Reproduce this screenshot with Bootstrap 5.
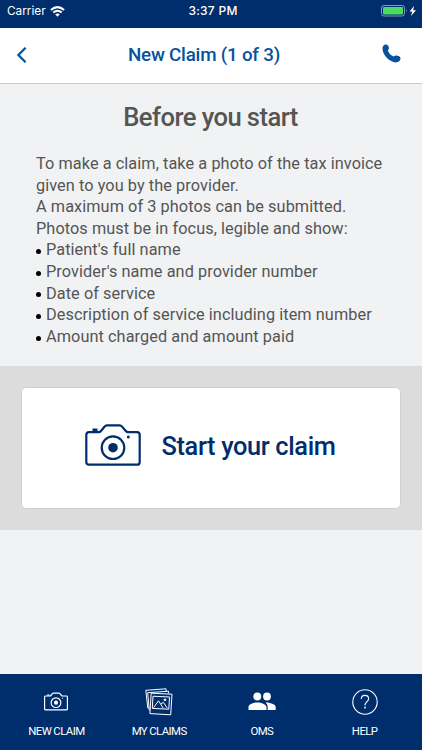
<!DOCTYPE html>
<html lang="en">
<head>
<meta charset="utf-8">
<meta name="viewport" content="width=device-width, initial-scale=1">
<title>New Claim</title>
<link href="https://cdn.jsdelivr.net/npm/bootstrap@5.3.0/dist/css/bootstrap.min.css" rel="stylesheet">
<style>
:root { --navy: #002e6c; --blue: #06529c; }
body { font-family: Roboto, sans-serif; background: #f1f2f4; color: #555; height: 750px; overflow: hidden; }
svg { display: block; flex: none; }
.status-strip { height: 28px; background: var(--navy); color: #fff; font: 11.8px/22px Inter, sans-serif; padding: 0 5px 0 7px; }
.status-side { flex: 1 1 0; height: 22px; }
.clock { font-weight: 500; font-size: 12px; letter-spacing: .25px; padding-left: 2px; }
.title-bar { height: 56px; background: #fff; border-bottom: 1px solid #c5c8d8; color: var(--blue); padding: 0 21px 2px 16px; }
.page-title { font-size: 18.8px; font-weight: 500; margin: 0 2px 0 0; line-height: 24px; letter-spacing: -.22px; }
.phone { margin-bottom: 2px; }
.intro { height: 282px; padding: 17px 24px 0 36px; }
.intro-title { font-size: 25.6px; font-weight: 500; line-height: 32px; margin: 0 13px 20px 0; letter-spacing: -.56px; }
.copy { font-size: 16.3px; line-height: 21.6px; letter-spacing: .07px; white-space: nowrap; }
.copy li { display: flex; align-items: center; }
.copy li::before { content: ""; width: 5px; height: 5px; border-radius: 50%; background: #000; margin: 3px 5px 0 0; }
.action-band { height: 164px; background: #dcdcdc; padding: 21px; }
.start-btn { height: 122px; border: 1px solid #cfcfcf; border-radius: 5px; background: #fff; color: var(--navy); font-size: 25.4px; font-weight: 500; gap: 20px; padding: 0 1px 4px 0; }
.start-btn span { letter-spacing: -.37px; }
.start-btn svg { margin-top: -2px; }
.start-btn:hover { background: #fff; color: var(--navy); }
.tab-strip { height: 76px; background: var(--navy); padding: 0 6px 0 5px; }
.tab-item { flex: 1 1 0; color: #fff; font-size: 11.4px; line-height: 16px; letter-spacing: -.6px; text-decoration: none; padding-top: 11px; }
.tab-icon { height: 33px; margin-bottom: 5px; }
</style>
</head>
<body class="d-flex flex-column">
<svg width="0" height="0" class="position-absolute" aria-hidden="true">
  <symbol id="camera" viewBox="0 0 56 42">
    <g fill="none" stroke="currentColor">
      <path d="M4 8.2h9.5q1.5 0 2.5-1.2l3.4-4.2Q20.500 1.300 22 1.300h12.500q1.500 0 2.600 1.300l3.700 4.400q1 1.200 2.500 1.200H52q2.700 0 2.700 2.700v27q0 2.800-2.700 2.800H4q-2.700 0-2.700-2.800v-27Q1.300 8.200 4 8.200z"/>
      <circle cx="28" cy="23.700" r="11.300"/>
    </g>
    <g fill="currentColor"><circle cx="28" cy="23.700" r="4.800"/><path d="M7.500 4.500h5v3h-5z"/><circle cx="43.300" cy="13" r="1.500"/></g>
  </symbol>
</svg>

<header>
  <div class="status-strip d-flex">
    <div class="status-side d-flex align-items-center gap-1">
      <span>Carrier</span>
      <svg width="15" height="11" viewBox="0 0 15 11" fill="none" stroke="#fff" stroke-width="2"><path d="M.9 4.100q6.600-6 13.200 0M3.300 6.600q4.200-3.700 8.400 0"/><path d="M5.200 8.300q2.300-1.800 4.600 0L7.500 10.700z" fill="#fff" stroke="none"/></svg>
    </div>
    <span class="clock">3:37 PM</span>
    <div class="status-side d-flex align-items-center justify-content-end">
      <svg width="36" height="12" viewBox="0 0 36 12"><rect x=".5" y=".5" width="23" height="10.500" rx="2.500" fill="none" stroke="#8298b8"/><rect x="2" y="2" width="20" height="7.500" rx="1" fill="#4cd964"/><path d="M25 4q1.500 1.700 0 3.500z" fill="#8298b8"/><path d="M33 1l-4.500 5.500h2.700L30 11l5-5.800h-2.800z" fill="#fff"/></svg>
    </div>
  </div>
  <nav class="title-bar d-flex align-items-center justify-content-between">
    <svg width="12" height="18" viewBox="0 0 12 18" fill="none" stroke="currentColor" stroke-width="2.300"><path d="M9.600 1.700 2.400 9l7.200 7.300"/></svg>
    <h1 class="page-title">New Claim (1 of 3)</h1>
    <svg class="phone" width="19" height="19" viewBox="0 0 19 19" fill="currentColor"><path d="M3.800.5C5.600.5 6.900 2 6.900 3.900c0 1.100-.5 1.900-1.100 2.500.8 2.500 3.200 5.100 5.900 6.200.7-.7 1.500-1 2.600-1 2.100 0 4.200 1.300 4.200 3 0 2.100-2.300 3.800-4.700 3.800C7.900 18.400.5 11.300.5 4.600.5 2.200 1.700.5 3.800.5z"/></svg>
  </nav>
</header>

<main class="flex-grow-1">
  <section class="intro">
    <h2 class="intro-title text-center">Before you start</h2>
    <div class="copy">
      <div>To make a claim, take a photo of the tax invoice</div>
      <div>given to you by the provider.</div>
      <div>A maximum of 3 photos can be submitted.</div>
      <div>Photos must be in focus, legible and show:</div>
      <ul class="list-unstyled mb-0">
        <li>Patient's full name</li>
        <li>Provider's name and provider number</li>
        <li>Date of service</li>
        <li>Description of service including item number</li>
        <li>Amount charged and amount paid</li>
      </ul>
    </div>
  </section>
  <section class="action-band">
    <button type="button" class="start-btn btn w-100 d-flex align-items-center justify-content-center">
      <svg width="56" height="42" stroke-width="2.200"><use href="#camera"/></svg>
      <span>Start your claim</span>
    </button>
  </section>
</main>

<nav class="tab-strip d-flex">
  <a href="#" class="tab-item d-flex flex-column align-items-center">
    <span class="tab-icon d-flex align-items-center"><svg width="24" height="19" stroke-width="2.800"><use href="#camera"/></svg></span>
    <span>NEW CLAIM</span>
  </a>
  <a href="#" class="tab-item d-flex flex-column align-items-center">
    <span class="tab-icon d-flex align-items-center"><svg width="28" height="28" viewBox="0 0 28 28" fill="none" stroke="#fff"><path d="M2.800 20 .8 2.300 21 .8l.3 3M4.300 22.500 2.700 4.700 23.500 3.200l.2 2.300M2.800 20h1.200"/><path d="m6.200 5.200 20.800 1-1.300 20.600-20.800-1.200z"/><path d="m8 8.200 16.500.8-.7 12.200-16.500-.8z"/><path d="m8.500 19.700 5-6.900 4.600 7.200m-2.300-3.800 2.500-2 4 6"/><circle cx="20" cy="11.800" r=".9" fill="#fff"/></svg></span>
    <span>MY CLAIMS</span>
  </a>
  <a href="#" class="tab-item d-flex flex-column align-items-center">
    <span class="tab-icon d-flex align-items-center"><svg width="28" height="19" viewBox="0 0 28 19" fill="#fff"><circle cx="9.300" cy="4.500" r="3.900"/><circle cx="19" cy="4.500" r="3.900"/><path d="M.5 18v-2.800c0-3.200 5.600-4.800 9-4.800s9 1.600 9 4.800V18zM19.700 18v-2.800c0-2.100-.9-3.500-2.200-4.600 3.300-.2 10.200 1.300 10.200 4.600V18z"/></svg></span>
    <span>OMS</span>
  </a>
  <a href="#" class="tab-item d-flex flex-column align-items-center">
    <span class="tab-icon d-flex align-items-center"><svg width="26" height="26" viewBox="0 0 26 26" fill="none" stroke="#fff" stroke-width="1.100"><circle cx="13" cy="13" r="12.200"/><path d="M9.300 10c0-2.500 1.500-3.600 3.600-3.600s3.700 1.200 3.700 3.300c0 3-3.600 3.200-3.600 6.200v.6"/><path d="M13 17.800v1.600" stroke-width="1.500"/></svg></span>
    <span>HELP</span>
  </a>
</nav>
<script src="https://cdn.jsdelivr.net/npm/bootstrap@5.3.0/dist/js/bootstrap.bundle.min.js"></script>
</body>
</html>
